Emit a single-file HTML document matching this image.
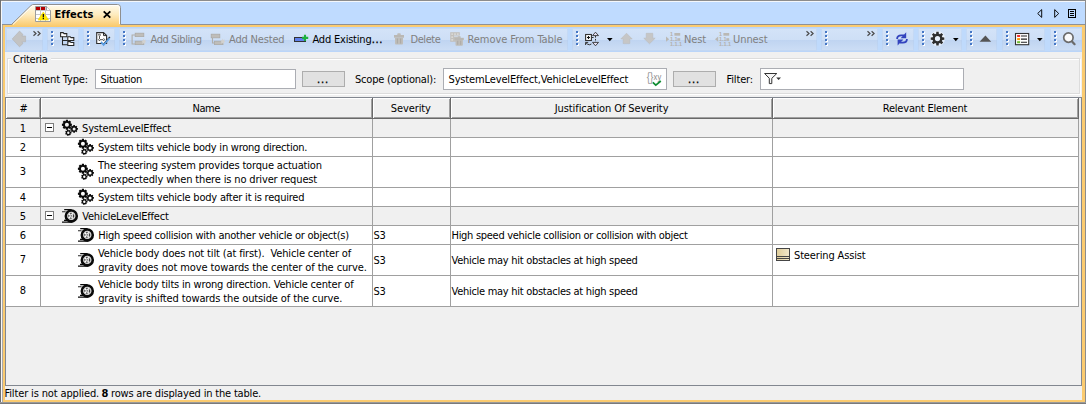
<!DOCTYPE html>
<html><head><meta charset="utf-8"><title>Effects</title>
<style>
html,body{margin:0;padding:0;}
body{width:1086px;height:404px;overflow:hidden;background:#F0F0F0;position:relative;
 font-family:"DejaVu Sans Condensed","Liberation Sans",sans-serif;font-size:11px;color:#000;}
.a{position:absolute;}
svg{position:absolute;overflow:visible;}
.t{position:absolute;white-space:pre;line-height:14px;height:14px;}
.b{font-weight:bold;}
.dis{color:#808080;}
.g{position:absolute;top:28px;height:23px;background:linear-gradient(#D4E3F8 0,#CEDFF6 52%,#BFD4F1 52%,#CDDEF5 100%);box-shadow:inset 0 0 0 1px rgba(176,204,240,.35);}
.grip{position:absolute;top:31px;width:3px;height:15px;}
.fld{position:absolute;top:69px;height:18px;background:#fff;border:1px solid #ABADB3;}
.btn{position:absolute;top:71px;width:41px;height:14px;background:#E1E1E1;border:1px solid #ADADAD;}
.hl{position:absolute;left:6px;width:1073px;height:1px;background:#A0A0A0;}
.vl{position:absolute;top:119px;width:1px;height:188px;background:#A0A0A0;}
.row{position:absolute;left:6px;width:1073px;background:#fff;}
.grp{background:#F0F0F0;}
.hc{position:absolute;top:98px;height:21px;background:#F0F0F0;box-shadow:inset -1px -1px 0 #696969,inset 1px 1px 0 #fff,inset -2px -2px 0 #A0A0A0;}
</style></head><body>
<div class="a" style="left:0;top:0;width:1086px;height:27px;background:#BFDBFF"></div>
<div class="a" style="left:0;top:1px;width:1086px;height:1px;background:#F4F7FB"></div>
<div class="a" style="left:1px;top:1px;width:1px;height:402px;background:#F8F8F8"></div>
<div class="a" style="left:0;top:0;width:1086px;height:1px;background:#8C8C8C"></div>
<div class="a" style="left:0;top:0;width:1px;height:404px;background:#707070"></div>
<div class="a" style="left:1085px;top:0;width:1px;height:404px;background:#8C8C8C"></div>
<div class="a" style="left:0;top:402px;width:1086px;height:1px;background:#9A9A9A"></div>
<div class="a" style="left:0;top:403px;width:1086px;height:1px;background:#7A7A7A"></div>
<div class="a" style="left:2px;top:24px;width:1px;height:378px;background:#A9A9A9"></div>
<div class="a" style="left:2px;top:24px;width:1083px;height:1px;background:#8E9196"></div>
<div class="a" style="left:3px;top:25px;width:1082px;height:2px;background:#FBCB70"></div>
<div class="a" style="left:3px;top:25px;width:2px;height:377px;background:#FBCB70"></div>
<div class="a" style="left:1082px;top:25px;width:2.6px;height:377px;background:#FBCB70"></div>
<div class="a" style="left:3px;top:400px;width:1082px;height:2px;background:#FBCB70"></div>
<div class="a" style="left:5px;top:27px;width:1077px;height:24px;background:#BFDAFC"></div>
<div class="a" style="left:5px;top:27px;width:1077px;height:1px;background:#B9D5FB"></div>
<div class="a" style="left:5px;top:51px;width:1077px;height:1px;background:#BAD5F9"></div>
<div class="g" style="left:6px;width:37.4px"></div>
<div class="g" style="left:47px;width:32px"></div>
<div class="g" style="left:82.5px;width:32.0px"></div>
<div class="g" style="left:118.5px;width:449.0px"></div>
<div class="g" style="left:572px;width:244.5px"></div>
<div class="g" style="left:821px;width:56.5px"></div>
<div class="g" style="left:882px;width:31.5px"></div>
<div class="g" style="left:917.5px;width:44.0px"></div>
<div class="g" style="left:965.7px;width:31.8px"></div>
<div class="g" style="left:1001.8px;width:43.5px"></div>
<div class="g" style="left:1049.8px;width:31.9px"></div>
<svg class="grip" style="left:51px" width="3" height="15" viewBox="0 0 3 15"><rect x="1" y="1" width="2" height="2" fill="#fff"/><rect x="0" y="0" width="2" height="2" fill="#4577C6"/><rect x="1" y="5" width="2" height="2" fill="#fff"/><rect x="0" y="4" width="2" height="2" fill="#4577C6"/><rect x="1" y="9" width="2" height="2" fill="#fff"/><rect x="0" y="8" width="2" height="2" fill="#4577C6"/><rect x="1" y="13" width="2" height="2" fill="#fff"/><rect x="0" y="12" width="2" height="2" fill="#4577C6"/></svg>
<svg class="grip" style="left:87px" width="3" height="15" viewBox="0 0 3 15"><rect x="1" y="1" width="2" height="2" fill="#fff"/><rect x="0" y="0" width="2" height="2" fill="#4577C6"/><rect x="1" y="5" width="2" height="2" fill="#fff"/><rect x="0" y="4" width="2" height="2" fill="#4577C6"/><rect x="1" y="9" width="2" height="2" fill="#fff"/><rect x="0" y="8" width="2" height="2" fill="#4577C6"/><rect x="1" y="13" width="2" height="2" fill="#fff"/><rect x="0" y="12" width="2" height="2" fill="#4577C6"/></svg>
<svg class="grip" style="left:123px" width="3" height="15" viewBox="0 0 3 15"><rect x="1" y="1" width="2" height="2" fill="#fff"/><rect x="0" y="0" width="2" height="2" fill="#4577C6"/><rect x="1" y="5" width="2" height="2" fill="#fff"/><rect x="0" y="4" width="2" height="2" fill="#4577C6"/><rect x="1" y="9" width="2" height="2" fill="#fff"/><rect x="0" y="8" width="2" height="2" fill="#4577C6"/><rect x="1" y="13" width="2" height="2" fill="#fff"/><rect x="0" y="12" width="2" height="2" fill="#4577C6"/></svg>
<svg class="grip" style="left:576px" width="3" height="15" viewBox="0 0 3 15"><rect x="1" y="1" width="2" height="2" fill="#fff"/><rect x="0" y="0" width="2" height="2" fill="#4577C6"/><rect x="1" y="5" width="2" height="2" fill="#fff"/><rect x="0" y="4" width="2" height="2" fill="#4577C6"/><rect x="1" y="9" width="2" height="2" fill="#fff"/><rect x="0" y="8" width="2" height="2" fill="#4577C6"/><rect x="1" y="13" width="2" height="2" fill="#fff"/><rect x="0" y="12" width="2" height="2" fill="#4577C6"/></svg>
<svg class="grip" style="left:825px" width="3" height="15" viewBox="0 0 3 15"><rect x="1" y="1" width="2" height="2" fill="#fff"/><rect x="0" y="0" width="2" height="2" fill="#4577C6"/><rect x="1" y="5" width="2" height="2" fill="#fff"/><rect x="0" y="4" width="2" height="2" fill="#4577C6"/><rect x="1" y="9" width="2" height="2" fill="#fff"/><rect x="0" y="8" width="2" height="2" fill="#4577C6"/><rect x="1" y="13" width="2" height="2" fill="#fff"/><rect x="0" y="12" width="2" height="2" fill="#4577C6"/></svg>
<svg class="grip" style="left:886px" width="3" height="15" viewBox="0 0 3 15"><rect x="1" y="1" width="2" height="2" fill="#fff"/><rect x="0" y="0" width="2" height="2" fill="#4577C6"/><rect x="1" y="5" width="2" height="2" fill="#fff"/><rect x="0" y="4" width="2" height="2" fill="#4577C6"/><rect x="1" y="9" width="2" height="2" fill="#fff"/><rect x="0" y="8" width="2" height="2" fill="#4577C6"/><rect x="1" y="13" width="2" height="2" fill="#fff"/><rect x="0" y="12" width="2" height="2" fill="#4577C6"/></svg>
<svg class="grip" style="left:922px" width="3" height="15" viewBox="0 0 3 15"><rect x="1" y="1" width="2" height="2" fill="#fff"/><rect x="0" y="0" width="2" height="2" fill="#4577C6"/><rect x="1" y="5" width="2" height="2" fill="#fff"/><rect x="0" y="4" width="2" height="2" fill="#4577C6"/><rect x="1" y="9" width="2" height="2" fill="#fff"/><rect x="0" y="8" width="2" height="2" fill="#4577C6"/><rect x="1" y="13" width="2" height="2" fill="#fff"/><rect x="0" y="12" width="2" height="2" fill="#4577C6"/></svg>
<svg class="grip" style="left:970px" width="3" height="15" viewBox="0 0 3 15"><rect x="1" y="1" width="2" height="2" fill="#fff"/><rect x="0" y="0" width="2" height="2" fill="#4577C6"/><rect x="1" y="5" width="2" height="2" fill="#fff"/><rect x="0" y="4" width="2" height="2" fill="#4577C6"/><rect x="1" y="9" width="2" height="2" fill="#fff"/><rect x="0" y="8" width="2" height="2" fill="#4577C6"/><rect x="1" y="13" width="2" height="2" fill="#fff"/><rect x="0" y="12" width="2" height="2" fill="#4577C6"/></svg>
<svg class="grip" style="left:1006px" width="3" height="15" viewBox="0 0 3 15"><rect x="1" y="1" width="2" height="2" fill="#fff"/><rect x="0" y="0" width="2" height="2" fill="#4577C6"/><rect x="1" y="5" width="2" height="2" fill="#fff"/><rect x="0" y="4" width="2" height="2" fill="#4577C6"/><rect x="1" y="9" width="2" height="2" fill="#fff"/><rect x="0" y="8" width="2" height="2" fill="#4577C6"/><rect x="1" y="13" width="2" height="2" fill="#fff"/><rect x="0" y="12" width="2" height="2" fill="#4577C6"/></svg>
<svg class="grip" style="left:1054px" width="3" height="15" viewBox="0 0 3 15"><rect x="1" y="1" width="2" height="2" fill="#fff"/><rect x="0" y="0" width="2" height="2" fill="#4577C6"/><rect x="1" y="5" width="2" height="2" fill="#fff"/><rect x="0" y="4" width="2" height="2" fill="#4577C6"/><rect x="1" y="9" width="2" height="2" fill="#fff"/><rect x="0" y="8" width="2" height="2" fill="#4577C6"/><rect x="1" y="13" width="2" height="2" fill="#fff"/><rect x="0" y="12" width="2" height="2" fill="#4577C6"/></svg>
<svg style="left:33px;top:31px" width="8" height="5" viewBox="0 0 8 5"><path d="M0.5 0.2L3 2.5L0.5 4.8M4.6 0.2L7.1 2.5L4.6 4.8" fill="none" stroke="#4A4A4A" stroke-width="1.2"/></svg>
<svg style="left:806px;top:31px" width="8" height="5" viewBox="0 0 8 5"><path d="M0.5 0.2L3 2.5L0.5 4.8M4.6 0.2L7.1 2.5L4.6 4.8" fill="none" stroke="#4A4A4A" stroke-width="1.2"/></svg>
<svg style="left:867px;top:31px" width="8" height="5" viewBox="0 0 8 5"><path d="M0.5 0.2L3 2.5L0.5 4.8M4.6 0.2L7.1 2.5L4.6 4.8" fill="none" stroke="#4A4A4A" stroke-width="1.2"/></svg>
<svg style="left:606.7px;top:38px" width="6" height="4" viewBox="0 0 6 4"><path d="M0 0H5.6L2.8 3.2Z" fill="#000"/></svg>
<svg style="left:952.9px;top:38px" width="6" height="4" viewBox="0 0 6 4"><path d="M0 0H5.6L2.8 3.2Z" fill="#000"/></svg>
<svg style="left:1036.8px;top:38px" width="6" height="4" viewBox="0 0 6 4"><path d="M0 0H5.6L2.8 3.2Z" fill="#000"/></svg>
<svg style="left:0;top:0" width="130" height="28" viewBox="0 0 130 28">
<defs><linearGradient id="tg" x1="0" y1="0" x2="0" y2="1"><stop offset="0" stop-color="#FFFCEE"/><stop offset="0.45" stop-color="#FEEBBE"/><stop offset="1" stop-color="#FAC868"/></linearGradient></defs>
<path d="M5 27V25H11.5L31 5.5Q32 4.5 34 4.5H117.5Q120.5 4.5 120.5 7.5V25H130V27Z" fill="url(#tg)" stroke="none"/>
<path d="M11.5 24.5L31 5.5Q32 4.5 34 4.5H117.5Q120.5 4.5 120.5 7.5V24.5" fill="none" stroke="#8F8F8F" stroke-width="1"/>
<path d="M13 24.5L32 6Q32.6 5.5 34 5.5H117.5Q119.5 5.5 119.5 7.5V24" fill="none" stroke="#FFFFFF" stroke-width="1" opacity=".9"/>
</svg>
<svg style="left:35px;top:6px" width="16" height="16" viewBox="0 0 16 16">
<path d="M0.5 0.5H11.5L15.5 4.5V15.5H0.5Z" fill="#fff" stroke="#9C9C9C"/>
<path d="M11.5 0.5V4.5H15.5" fill="#fff" stroke="#9C9C9C"/>
<rect x="1" y="1" width="4" height="3" fill="#B40000"/><rect x="6" y="1" width="4" height="3" fill="#B40000"/>
<path d="M1 4.5H15M1 8.5H15M1 12.5H15M5.5 1V15M10.5 1V15" stroke="#C8C8C8" stroke-width="1" fill="none"/>
<path d="M8.3 6L13.6 14H3Z" fill="#FFE900" stroke="#F2D500" stroke-width=".6"/>
<rect x="7.7" y="8" width="1.3" height="3.4" fill="#111"/><rect x="7.7" y="12" width="1.3" height="1.2" fill="#111"/>
</svg>
<svg style="left:103px;top:11px" width="8" height="7" viewBox="0 0 8 7"><path d="M0.7 0.3L7.3 6.7M7.3 0.3L0.7 6.7" stroke="#000" stroke-width="1.8" fill="none"/></svg>
<svg style="left:1037px;top:9px" width="6" height="9" viewBox="0 0 6 9"><path d="M4.7 0.6V8.4L0.7 4.5Z" fill="none" stroke="#000" stroke-width=".95"/></svg>
<svg style="left:1054px;top:9px" width="6" height="9" viewBox="0 0 6 9"><path d="M0.7 0.6V8.4L4.7 4.5Z" fill="none" stroke="#000" stroke-width=".95"/></svg>
<svg style="left:1068px;top:9px" width="8" height="9" viewBox="0 0 8 9"><rect x=".5" y=".5" width="7" height="8" fill="none" stroke="#000"/><path d="M2 2.5H6M2 4.5H6M2 6.5H6" stroke="#000"/></svg>
<div class="a" style="left:7px;top:58px;width:1071px;height:34px;border:1px solid #DCDCDC;box-shadow:inset 1px 1px 0 #fff, 1px 1px 0 #fff"></div>
<div class="a" style="left:11px;top:54px;width:40px;height:12px;background:#F0F0F0"></div>
<div class="fld" style="left:95px;width:199px"></div>
<div class="btn" style="left:302px"></div>
<div class="fld" style="left:443px;width:222px;top:68px;height:20px"></div>
<div class="btn" style="left:673px"></div>
<div class="fld" style="left:760px;width:202px;top:68px;height:20px"></div>
<div class="a" style="left:5px;top:97px;width:1075px;height:287px;border:1px solid #828790"></div>
<div class="row grp" style="top:119px;height:18px"></div>
<div class="hl" style="top:137px"></div>
<div class="row" style="top:138px;height:18px"></div>
<div class="hl" style="top:156px"></div>
<div class="row" style="top:157px;height:30px"></div>
<div class="hl" style="top:187px"></div>
<div class="row" style="top:188px;height:18px"></div>
<div class="hl" style="top:206px"></div>
<div class="row grp" style="top:207px;height:18px"></div>
<div class="hl" style="top:225px"></div>
<div class="row" style="top:226px;height:18px"></div>
<div class="hl" style="top:244px"></div>
<div class="row" style="top:245px;height:30px"></div>
<div class="hl" style="top:275px"></div>
<div class="row" style="top:276px;height:30px"></div>
<div class="hl" style="top:306px"></div>
<div class="vl" style="left:40px"></div>
<div class="vl" style="left:372px"></div>
<div class="vl" style="left:450px"></div>
<div class="vl" style="left:772px"></div>
<div class="vl" style="left:1078px"></div>
<div class="hc" style="left:6px;width:35px"></div>
<div class="hc" style="left:41px;width:332px"></div>
<div class="hc" style="left:373px;width:78px"></div>
<div class="hc" style="left:451px;width:322px"></div>
<div class="hc" style="left:773px;width:306px"></div>
<svg style="left:12px;top:31px" width="14" height="16" viewBox="0 0 14 16"><path d="M0.2 7.9L7.5 0.1L11 3.5L9.9 5H13.6V10.8H9.9L11 12.4L7.5 15.8Z" fill="#C3C3C3" stroke="#B4B4B4" stroke-width=".6"/></svg>
<svg style="left:60px;top:32px" width="14" height="14" viewBox="0 0 14 14"><path d="M0.6 4.7V0.6H3.2L4 1.6H6.8V4.7Z" fill="#fff" stroke="#262626" stroke-width="1.05"/>
<path d="M2.5 4.8V12.7H7.8M2.5 8.5H7.8" fill="none" stroke="#262626" stroke-width="1.05"/>
<path d="M7.8 8.5V4.7H10.2L11 5.6H13.8V8.5Z" fill="#fff" stroke="#262626" stroke-width="1.05"/>
<path d="M7.8 13.4V9.6H10.2L11 10.5H13.8V13.4Z" fill="#fff" stroke="#262626" stroke-width="1.05"/></svg>
<svg style="left:96px;top:32px" width="14" height="14" viewBox="0 0 14 14"><path d="M0.7 0.6H7.5L10.6 3.6V11.5H0.7Z" fill="#fff" stroke="#2E2E2E" stroke-width="1.1"/>
<path d="M7.5 0.6V3.6H10.6" fill="none" stroke="#2E2E2E" stroke-width="1"/>
<path d="M3.5 1.9L4.6 3L3.5 4.1L2.4 3ZM3.5 4.1V6.6M3.5 6.6L4.6 7.7L3.5 8.8L2.4 7.7ZM7.7 6.6L8.8 7.7L7.7 8.8L6.6 7.7ZM4.6 7.7H6.6" fill="none" stroke="#2A2A2A" stroke-width=".8"/>
<path d="M7.4 12.2L13.4 5.4L14 6" fill="none" stroke="#333" stroke-width="1.1"/>
<path d="M5 9.9L7.6 12.9L13.6 6.3" fill="none" stroke="#5B9FE6" stroke-width="1.7"/></svg>
<svg style="left:131px;top:32px" width="16" height="14" viewBox="0 0 16 14"><path d="M4 3H1.1V12H4" fill="none" stroke="#B0AEAA" stroke-width="1.1"/>
<rect x="4.2" y="1.2" width="8.6" height="3.4" fill="#BFBDB9" stroke="#ACAAA6" stroke-width=".8"/>
<rect x="4.2" y="9.2" width="8.6" height="3.4" fill="#BFBDB9" stroke="#ACAAA6" stroke-width=".8"/>
<path d="M12.4 6.6L13.1 8.3L14.9 7.6L14.2 9.2L15.6 10L14 10.6L14.3 12L12.6 11.2L11 11.8L11.5 10L10.4 9L12 8.5Z" fill="#D2D1CF"/></svg>
<svg style="left:210px;top:32px" width="16" height="14" viewBox="0 0 16 14"><path d="M2.5 6V11H4.4" fill="none" stroke="#B0AEAA" stroke-width="1.1"/>
<rect x="1.2" y="2.2" width="8.6" height="3.6" fill="#BFBDB9" stroke="#ACAAA6" stroke-width=".8"/>
<rect x="4.4" y="9.2" width="8.6" height="3.4" fill="#BFBDB9" stroke="#ACAAA6" stroke-width=".8"/>
<path d="M12.3 6.4L13 8.1L14.8 7.4L14.1 9L15.5 9.8L13.9 10.4L14.2 11.8L12.5 11L10.9 11.6L11.4 9.8L10.3 8.8L11.9 8.3Z" fill="#D2D1CF"/></svg>
<svg style="left:294px;top:34px" width="15" height="9" viewBox="0 0 15 9"><rect x="0.5" y="3.5" width="11" height="4" fill="#5F80EA" stroke="#333" stroke-width="1"/>
<path d="M8 3.9H14.2M11 0.8V7" stroke="#1DB13F" stroke-width="2.1" fill="none"/></svg>
<svg style="left:394px;top:33px" width="10" height="12" viewBox="0 0 10 12"><g transform="translate(0,0)"><rect x="3.2" y="0.2" width="3.6" height="2.2" rx="1" fill="#BDBBB7"/><rect x="0" y="2" width="10" height="2.7" fill="#BAB8B4"/><path d="M1 4.7H9V10.6Q9 11.6 8 11.6H2Q1 11.6 1 10.6Z" fill="#BFBDB9"/><path d="M3.4 5.6V10.4M6.6 5.6V10.4" stroke="#ACAAA6" stroke-width="1.1"/></g></svg>
<svg style="left:450px;top:32px" width="14" height="14" viewBox="0 0 14 14"><rect x="0.2" y="0.2" width="9.6" height="9.6" fill="#C2C0BC"/>
<path d="M1.3 1.3H3.1V3H1.3ZM4.1 1.3H5.9V3H4.1ZM6.9 1.3H8.7V3H6.9ZM1.3 4.2H3.1V5.9H1.3ZM1.3 7H3.1V8.7H1.3Z" fill="#D8D7D5"/>
<rect x="4" y="3.6" width="10" height="1" fill="#D5E3F7"/><g transform="translate(4.6,4.2) scale(0.92,0.82)"><rect x="3.2" y="0.2" width="3.6" height="2.2" rx="1" fill="#BDBBB7"/><rect x="0" y="2" width="10" height="2.7" fill="#BAB8B4"/><path d="M1 4.7H9V10.6Q9 11.6 8 11.6H2Q1 11.6 1 10.6Z" fill="#BFBDB9"/><path d="M3.4 5.6V10.4M6.6 5.6V10.4" stroke="#ACAAA6" stroke-width="1.1"/></g></svg>
<svg style="left:585px;top:32px" width="14" height="14" viewBox="0 0 14 14"><rect x="0.6" y="2.5" width="5.8" height="6" fill="#fff" stroke="#333" stroke-width="1.1"/>
<path d="M2 5.5H5M3.5 4V7" stroke="#111" stroke-width="1.1"/>
<path d="M6.6 5.5H8.6" stroke="#333" stroke-width="1"/>
<path d="M10.5 4V10" stroke="#333" stroke-width="1" stroke-dasharray="1.6 1.3"/>
<path d="M10.5 0.2L13.5 3.6H7.5Z" fill="#E6E0F4" stroke="#333" stroke-width=".9"/>
<path d="M10.5 13.8L13.5 10.4H7.5Z" fill="#E6E0F4" stroke="#333" stroke-width=".9"/>
<path d="M0.6 10.4H3.2M0.6 10.4V13M0.8 10.6L2.6 12.2Q4.5 13.4 6.4 12" fill="none" stroke="#333" stroke-width="1"/></svg>
<svg style="left:620px;top:33px" width="13" height="11" viewBox="0 0 13 11"><path d="M6.5 0.2L12.2 6H9.8V10.6H3.2V6H0.8Z" fill="#C6C6C6" stroke="#B9B9B9" stroke-width=".5"/></svg>
<svg style="left:643px;top:33px" width="13" height="11" viewBox="0 0 13 11"><path d="M6.5 10.8L12.2 5.2H9.8V0.3H3.2V5.2H0.8Z" fill="#C6C6C6" stroke="#B9B9B9" stroke-width=".5"/></svg>
<svg style="left:666px;top:32px" width="15" height="14" viewBox="0 0 15 14"><path d="M0 4.6L3.2 7.2L0 9.8Z" fill="#BAB8B4"/><g font-family="'Liberation Sans',sans-serif" font-size="5.4" font-weight="bold" fill="#B2B0AC">
<text x="4" y="3.8">1</text><text x="4" y="8.9">1.1</text><text x="4" y="13.8">1.1.1</text></g>
<rect x="8.4" y="1" width="5.8" height="2.7" fill="#BAB8B4"/><rect x="11.3" y="6.2" width="2.9" height="2.7" fill="#BAB8B4"/></svg>
<svg style="left:714.6px;top:32px" width="15" height="14" viewBox="0 0 15 14"><path d="M3.2 4.6L0 7.2L3.2 9.8Z" fill="#BAB8B4"/><g font-family="'Liberation Sans',sans-serif" font-size="5.4" font-weight="bold" fill="#B2B0AC">
<text x="4" y="3.8">1</text><text x="4" y="8.9">1.1</text><text x="4" y="13.8">1.1.1</text></g>
<rect x="8.4" y="1" width="5.8" height="2.7" fill="#BAB8B4"/><rect x="11.3" y="6.2" width="2.9" height="2.7" fill="#BAB8B4"/></svg>
<svg style="left:896px;top:32px" width="12" height="14" viewBox="0 0 12 14"><path d="M1.1 7Q1.1 3.3 5.2 3.3H8" fill="none" stroke="#3344BE" stroke-width="1.8"/>
<path d="M10.2 0.2V6.2H4.6Z" fill="#3344BE"/>
<path d="M10.9 7Q10.9 10.7 6.8 10.7H4" fill="none" stroke="#3344BE" stroke-width="1.8"/>
<path d="M1.6 13.6V7.6H7.4Z" fill="#3344BE"/></svg>
<svg style="left:930px;top:31px" width="15" height="15" viewBox="0 0 15 15"><circle cx="7.5" cy="7.6" r="7.6" fill="#fff" opacity=".55"/><path d="M14.30 6.41L14.30 8.79L12.32 8.92L11.84 10.08L13.15 11.57L11.47 13.25L9.98 11.94L8.82 12.42L8.69 14.40L6.31 14.40L6.18 12.42L5.02 11.94L3.53 13.25L1.85 11.57L3.16 10.08L2.68 8.92L0.70 8.79L0.70 6.41L2.68 6.28L3.16 5.12L1.85 3.63L3.53 1.95L5.02 3.26L6.18 2.78L6.31 0.80L8.69 0.80L8.82 2.78L9.98 3.26L11.47 1.95L13.15 3.63L11.84 5.12L12.32 6.28ZM4.90 7.60a2.60 2.60 0 1 0 5.20 0a2.60 2.60 0 1 0 -5.20 0Z" fill="#2E2E2E" fill-rule="evenodd"/></svg>
<svg style="left:979px;top:35px" width="13" height="7" viewBox="0 0 13 7"><path d="M6.4 0.6L12.2 6.8H0.6Z" fill="#555"/></svg>
<svg style="left:1015px;top:33px" width="14" height="12" viewBox="0 0 14 12"><rect x="0.5" y="0.5" width="13.2" height="11.2" fill="#fff" stroke="#333" stroke-width="1.1"/>
<rect x="2.1" y="2" width="3" height="2" fill="#F03030"/><rect x="2.1" y="5.1" width="3" height="2" fill="#FF9800"/><rect x="2.1" y="8.2" width="3" height="2" fill="#6DBB2E"/>
<path d="M6 3H12M6 6.1H12M6 9.2H12" stroke="#222" stroke-width="1.15"/></svg>
<svg style="left:1062px;top:32px" width="14" height="14" viewBox="0 0 14 14"><circle cx="6.4" cy="5.6" r="4.7" fill="#FAFAFA" stroke="#6B6B6B" stroke-width="1.7"/>
<path d="M10 9.4L12.6 12.2" stroke="#6B6B6B" stroke-width="2.2" stroke-linecap="round"/></svg>
<svg style="left:647px;top:71px" width="15" height="16" viewBox="0 0 15 16"><g font-family="'Liberation Sans',sans-serif" fill="#9A9A9A"><text x="-0.2" y="10.4" font-size="13" textLength="6.6" lengthAdjust="spacingAndGlyphs">{}</text><text x="6.6" y="9" font-size="9.5" textLength="7.6" lengthAdjust="spacingAndGlyphs" fill="#8A8A8A">xy</text></g>
<path d="M5.8 11.3L8.8 14.2L13.8 10" fill="none" stroke="#0E8C30" stroke-width="1.7"/></svg>
<svg style="left:764px;top:73px" width="18" height="12" viewBox="0 0 18 12"><path d="M0.6 0.5H12.8L7.8 5.3V10.6H5.3V5.3Z" fill="#F6F6F6" stroke="#333" stroke-width="1"/>
<path d="M12.2 4.4H17L14.6 7Z" fill="#333"/></svg>
<svg style="left:45px;top:123px" width="9" height="9" viewBox="0 0 9 9"><rect x="0.5" y="0.5" width="8" height="8" fill="#fff" stroke="#7D7D7D"/><path d="M2 4.5H7" stroke="#000"/></svg>
<svg style="left:45px;top:211px" width="9" height="9" viewBox="0 0 9 9"><rect x="0.5" y="0.5" width="8" height="8" fill="#fff" stroke="#7D7D7D"/><path d="M2 4.5H7" stroke="#000"/></svg>
<svg style="left:62px;top:120px" width="16" height="16" viewBox="0 0 16 16"><path d="M9.89 3.67L9.89 5.73L8.72 5.88L8.44 6.57L9.16 7.50L7.70 8.96L6.77 8.24L6.08 8.52L5.93 9.69L3.87 9.69L3.72 8.52L3.03 8.24L2.10 8.96L0.64 7.50L1.36 6.57L1.08 5.88L-0.09 5.73L-0.09 3.67L1.08 3.52L1.36 2.83L0.64 1.90L2.10 0.44L3.03 1.16L3.72 0.88L3.87 -0.29L5.93 -0.29L6.08 0.88L6.77 1.16L7.70 0.44L9.16 1.90L8.44 2.83L8.72 3.52ZM2.90 4.70a2.00 2.00 0 1 0 4.00 0a2.00 2.00 0 1 0 -4.00 0Z" fill="#0A0A0A" fill-rule="evenodd"/><path d="M15.92 8.11L15.92 9.69L14.97 9.78L14.75 10.30L15.36 11.04L14.24 12.16L13.50 11.55L12.98 11.77L12.89 12.72L11.31 12.72L11.22 11.77L10.70 11.55L9.96 12.16L8.84 11.04L9.45 10.30L9.23 9.78L8.28 9.69L8.28 8.11L9.23 8.02L9.45 7.50L8.84 6.76L9.96 5.64L10.70 6.25L11.22 6.03L11.31 5.08L12.89 5.08L12.98 6.03L13.50 6.25L14.24 5.64L15.36 6.76L14.75 7.50L14.97 8.02ZM10.60 8.90a1.50 1.50 0 1 0 3.00 0a1.50 1.50 0 1 0 -3.00 0Z" fill="#0A0A0A" fill-rule="evenodd"/><path d="M9.41 11.96L9.41 13.44L8.61 13.52L8.38 13.99L8.82 14.67L7.66 15.60L7.10 15.02L6.59 15.13L6.33 15.90L4.89 15.57L4.99 14.77L4.58 14.44L3.82 14.72L3.17 13.38L3.86 12.96L3.86 12.44L3.17 12.02L3.82 10.68L4.58 10.96L4.99 10.63L4.89 9.83L6.33 9.50L6.59 10.27L7.10 10.38L7.66 9.80L8.82 10.73L8.38 11.41L8.61 11.88ZM5.10 12.70a1.20 1.20 0 1 0 2.40 0a1.20 1.20 0 1 0 -2.40 0Z" fill="#0A0A0A" fill-rule="evenodd"/></svg>
<svg style="left:78px;top:139px" width="16" height="16" viewBox="0 0 16 16"><path d="M9.89 3.67L9.89 5.73L8.72 5.88L8.44 6.57L9.16 7.50L7.70 8.96L6.77 8.24L6.08 8.52L5.93 9.69L3.87 9.69L3.72 8.52L3.03 8.24L2.10 8.96L0.64 7.50L1.36 6.57L1.08 5.88L-0.09 5.73L-0.09 3.67L1.08 3.52L1.36 2.83L0.64 1.90L2.10 0.44L3.03 1.16L3.72 0.88L3.87 -0.29L5.93 -0.29L6.08 0.88L6.77 1.16L7.70 0.44L9.16 1.90L8.44 2.83L8.72 3.52ZM2.90 4.70a2.00 2.00 0 1 0 4.00 0a2.00 2.00 0 1 0 -4.00 0Z" fill="#0A0A0A" fill-rule="evenodd"/><path d="M15.92 8.11L15.92 9.69L14.97 9.78L14.75 10.30L15.36 11.04L14.24 12.16L13.50 11.55L12.98 11.77L12.89 12.72L11.31 12.72L11.22 11.77L10.70 11.55L9.96 12.16L8.84 11.04L9.45 10.30L9.23 9.78L8.28 9.69L8.28 8.11L9.23 8.02L9.45 7.50L8.84 6.76L9.96 5.64L10.70 6.25L11.22 6.03L11.31 5.08L12.89 5.08L12.98 6.03L13.50 6.25L14.24 5.64L15.36 6.76L14.75 7.50L14.97 8.02ZM10.60 8.90a1.50 1.50 0 1 0 3.00 0a1.50 1.50 0 1 0 -3.00 0Z" fill="#0A0A0A" fill-rule="evenodd"/><path d="M9.41 11.96L9.41 13.44L8.61 13.52L8.38 13.99L8.82 14.67L7.66 15.60L7.10 15.02L6.59 15.13L6.33 15.90L4.89 15.57L4.99 14.77L4.58 14.44L3.82 14.72L3.17 13.38L3.86 12.96L3.86 12.44L3.17 12.02L3.82 10.68L4.58 10.96L4.99 10.63L4.89 9.83L6.33 9.50L6.59 10.27L7.10 10.38L7.66 9.80L8.82 10.73L8.38 11.41L8.61 11.88ZM5.10 12.70a1.20 1.20 0 1 0 2.40 0a1.20 1.20 0 1 0 -2.40 0Z" fill="#0A0A0A" fill-rule="evenodd"/></svg>
<svg style="left:78px;top:164px" width="16" height="16" viewBox="0 0 16 16"><path d="M9.89 3.67L9.89 5.73L8.72 5.88L8.44 6.57L9.16 7.50L7.70 8.96L6.77 8.24L6.08 8.52L5.93 9.69L3.87 9.69L3.72 8.52L3.03 8.24L2.10 8.96L0.64 7.50L1.36 6.57L1.08 5.88L-0.09 5.73L-0.09 3.67L1.08 3.52L1.36 2.83L0.64 1.90L2.10 0.44L3.03 1.16L3.72 0.88L3.87 -0.29L5.93 -0.29L6.08 0.88L6.77 1.16L7.70 0.44L9.16 1.90L8.44 2.83L8.72 3.52ZM2.90 4.70a2.00 2.00 0 1 0 4.00 0a2.00 2.00 0 1 0 -4.00 0Z" fill="#0A0A0A" fill-rule="evenodd"/><path d="M15.92 8.11L15.92 9.69L14.97 9.78L14.75 10.30L15.36 11.04L14.24 12.16L13.50 11.55L12.98 11.77L12.89 12.72L11.31 12.72L11.22 11.77L10.70 11.55L9.96 12.16L8.84 11.04L9.45 10.30L9.23 9.78L8.28 9.69L8.28 8.11L9.23 8.02L9.45 7.50L8.84 6.76L9.96 5.64L10.70 6.25L11.22 6.03L11.31 5.08L12.89 5.08L12.98 6.03L13.50 6.25L14.24 5.64L15.36 6.76L14.75 7.50L14.97 8.02ZM10.60 8.90a1.50 1.50 0 1 0 3.00 0a1.50 1.50 0 1 0 -3.00 0Z" fill="#0A0A0A" fill-rule="evenodd"/><path d="M9.41 11.96L9.41 13.44L8.61 13.52L8.38 13.99L8.82 14.67L7.66 15.60L7.10 15.02L6.59 15.13L6.33 15.90L4.89 15.57L4.99 14.77L4.58 14.44L3.82 14.72L3.17 13.38L3.86 12.96L3.86 12.44L3.17 12.02L3.82 10.68L4.58 10.96L4.99 10.63L4.89 9.83L6.33 9.50L6.59 10.27L7.10 10.38L7.66 9.80L8.82 10.73L8.38 11.41L8.61 11.88ZM5.10 12.70a1.20 1.20 0 1 0 2.40 0a1.20 1.20 0 1 0 -2.40 0Z" fill="#0A0A0A" fill-rule="evenodd"/></svg>
<svg style="left:78px;top:189px" width="16" height="16" viewBox="0 0 16 16"><path d="M9.89 3.67L9.89 5.73L8.72 5.88L8.44 6.57L9.16 7.50L7.70 8.96L6.77 8.24L6.08 8.52L5.93 9.69L3.87 9.69L3.72 8.52L3.03 8.24L2.10 8.96L0.64 7.50L1.36 6.57L1.08 5.88L-0.09 5.73L-0.09 3.67L1.08 3.52L1.36 2.83L0.64 1.90L2.10 0.44L3.03 1.16L3.72 0.88L3.87 -0.29L5.93 -0.29L6.08 0.88L6.77 1.16L7.70 0.44L9.16 1.90L8.44 2.83L8.72 3.52ZM2.90 4.70a2.00 2.00 0 1 0 4.00 0a2.00 2.00 0 1 0 -4.00 0Z" fill="#0A0A0A" fill-rule="evenodd"/><path d="M15.92 8.11L15.92 9.69L14.97 9.78L14.75 10.30L15.36 11.04L14.24 12.16L13.50 11.55L12.98 11.77L12.89 12.72L11.31 12.72L11.22 11.77L10.70 11.55L9.96 12.16L8.84 11.04L9.45 10.30L9.23 9.78L8.28 9.69L8.28 8.11L9.23 8.02L9.45 7.50L8.84 6.76L9.96 5.64L10.70 6.25L11.22 6.03L11.31 5.08L12.89 5.08L12.98 6.03L13.50 6.25L14.24 5.64L15.36 6.76L14.75 7.50L14.97 8.02ZM10.60 8.90a1.50 1.50 0 1 0 3.00 0a1.50 1.50 0 1 0 -3.00 0Z" fill="#0A0A0A" fill-rule="evenodd"/><path d="M9.41 11.96L9.41 13.44L8.61 13.52L8.38 13.99L8.82 14.67L7.66 15.60L7.10 15.02L6.59 15.13L6.33 15.90L4.89 15.57L4.99 14.77L4.58 14.44L3.82 14.72L3.17 13.38L3.86 12.96L3.86 12.44L3.17 12.02L3.82 10.68L4.58 10.96L4.99 10.63L4.89 9.83L6.33 9.50L6.59 10.27L7.10 10.38L7.66 9.80L8.82 10.73L8.38 11.41L8.61 11.88ZM5.10 12.70a1.20 1.20 0 1 0 2.40 0a1.20 1.20 0 1 0 -2.40 0Z" fill="#0A0A0A" fill-rule="evenodd"/></svg>
<svg style="left:62px;top:209px" width="16" height="14" viewBox="0 0 16 14"><path d="M2.2 0.55H9.5M2 11.4H7M0 13.15H10.5" stroke="#0A0A0A" stroke-width="1.2" fill="none"/>
<path d="M0 2.7H3.6" stroke="#4A4A4A" stroke-width="1.2" fill="none"/>
<circle cx="9.3" cy="6.9" r="5.45" fill="#fff" stroke="#0A0A0A" stroke-width="2.6"/>
<circle cx="9.2" cy="6.9" r="2.35" fill="none" stroke="#3C3C3C" stroke-width="1.3" stroke-dasharray="1.55 1.4"/>
<circle cx="9.2" cy="6.9" r="3.5" fill="none" stroke="#9A9A9A" stroke-width=".6"/>
<circle cx="9.2" cy="6.9" r="0.8" fill="#666"/></svg>
<svg style="left:78px;top:228px" width="16" height="14" viewBox="0 0 16 14"><path d="M2.2 0.55H9.5M2 11.4H7M0 13.15H10.5" stroke="#0A0A0A" stroke-width="1.2" fill="none"/>
<path d="M0 2.7H3.6" stroke="#4A4A4A" stroke-width="1.2" fill="none"/>
<circle cx="9.3" cy="6.9" r="5.45" fill="#fff" stroke="#0A0A0A" stroke-width="2.6"/>
<circle cx="9.2" cy="6.9" r="2.35" fill="none" stroke="#3C3C3C" stroke-width="1.3" stroke-dasharray="1.55 1.4"/>
<circle cx="9.2" cy="6.9" r="3.5" fill="none" stroke="#9A9A9A" stroke-width=".6"/>
<circle cx="9.2" cy="6.9" r="0.8" fill="#666"/></svg>
<svg style="left:78px;top:253px" width="16" height="14" viewBox="0 0 16 14"><path d="M2.2 0.55H9.5M2 11.4H7M0 13.15H10.5" stroke="#0A0A0A" stroke-width="1.2" fill="none"/>
<path d="M0 2.7H3.6" stroke="#4A4A4A" stroke-width="1.2" fill="none"/>
<circle cx="9.3" cy="6.9" r="5.45" fill="#fff" stroke="#0A0A0A" stroke-width="2.6"/>
<circle cx="9.2" cy="6.9" r="2.35" fill="none" stroke="#3C3C3C" stroke-width="1.3" stroke-dasharray="1.55 1.4"/>
<circle cx="9.2" cy="6.9" r="3.5" fill="none" stroke="#9A9A9A" stroke-width=".6"/>
<circle cx="9.2" cy="6.9" r="0.8" fill="#666"/></svg>
<svg style="left:78px;top:284px" width="16" height="14" viewBox="0 0 16 14"><path d="M2.2 0.55H9.5M2 11.4H7M0 13.15H10.5" stroke="#0A0A0A" stroke-width="1.2" fill="none"/>
<path d="M0 2.7H3.6" stroke="#4A4A4A" stroke-width="1.2" fill="none"/>
<circle cx="9.3" cy="6.9" r="5.45" fill="#fff" stroke="#0A0A0A" stroke-width="2.6"/>
<circle cx="9.2" cy="6.9" r="2.35" fill="none" stroke="#3C3C3C" stroke-width="1.3" stroke-dasharray="1.55 1.4"/>
<circle cx="9.2" cy="6.9" r="3.5" fill="none" stroke="#9A9A9A" stroke-width=".6"/>
<circle cx="9.2" cy="6.9" r="0.8" fill="#666"/></svg>
<svg style="left:776px;top:248px" width="14" height="13" viewBox="0 0 14 13"><defs><linearGradient id="bg1" x1="0" y1="0" x2="1" y2="0"><stop offset="0" stop-color="#DFCD98"/><stop offset="1" stop-color="#F1E7CB"/></linearGradient></defs>
<rect x="0.5" y="0.5" width="13" height="12" fill="url(#bg1)" stroke="#454545" stroke-width="1"/>
<path d="M1 8.5H13M1 10.5H13" stroke="#454545" stroke-width="1"/></svg>
<!-- text -->
<span class="t b" style="left:54.5px;top:8px;letter-spacing:0.07px;">Effects</span>
<span class="t dis" style="left:150.5px;top:33px;letter-spacing:-0.42px;">Add Sibling</span>
<span class="t dis" style="left:229.0px;top:33px;letter-spacing:-0.17px;">Add Nested</span>
<span class="t" style="left:312.5px;top:33px;letter-spacing:-0.21px;">Add Existing</span>
<span class="t" style="left:371.8px;top:33px;letter-spacing:0.60px;-webkit-text-stroke:0.3px #000;">...</span>
<span class="t dis" style="left:410.5px;top:33px;letter-spacing:-0.42px;">Delete</span>
<span class="t dis" style="left:467.5px;top:33px;letter-spacing:-0.07px;">Remove From Table</span>
<span class="t dis" style="left:684.0px;top:33px;letter-spacing:-0.13px;">Nest</span>
<span class="t dis" style="left:733.0px;top:33px;letter-spacing:-0.07px;">Unnest</span>
<span class="t" style="left:13.0px;top:53px;letter-spacing:-0.25px;">Criteria</span>
<span class="t" style="left:20.0px;top:73px;letter-spacing:-0.16px;">Element Type:</span>
<span class="t" style="left:100.5px;top:73px;letter-spacing:-0.30px;">Situation</span>
<span class="t" style="left:317.0px;top:73px;letter-spacing:0.85px;-webkit-text-stroke:0.3px #000;">...</span>
<span class="t" style="left:355.0px;top:73px;letter-spacing:-0.20px;">Scope (optional):</span>
<span class="t" style="left:448.5px;top:73px;letter-spacing:-0.14px;">SystemLevelEffect,VehicleLevelEffect</span>
<span class="t" style="left:688.0px;top:73px;letter-spacing:0.85px;-webkit-text-stroke:0.3px #000;">...</span>
<span class="t" style="left:726.5px;top:73px;letter-spacing:-0.15px;">Filter:</span>
<span class="t" style="left:19.5px;top:102px;">#</span>
<span class="t" style="left:192.5px;top:102px;letter-spacing:-0.43px;">Name</span>
<span class="t" style="left:390.8px;top:102px;letter-spacing:-0.11px;">Severity</span>
<span class="t" style="left:554.8px;top:102px;letter-spacing:-0.10px;">Justification Of Severity</span>
<span class="t" style="left:882.7px;top:102px;letter-spacing:-0.19px;">Relevant Element</span>
<span class="t" style="left:19.7px;top:122px;">1</span>
<span class="t" style="left:19.7px;top:141px;">2</span>
<span class="t" style="left:19.7px;top:165px;">3</span>
<span class="t" style="left:19.7px;top:191px;">4</span>
<span class="t" style="left:19.7px;top:210px;">5</span>
<span class="t" style="left:19.7px;top:229px;">6</span>
<span class="t" style="left:19.7px;top:253px;">7</span>
<span class="t" style="left:19.7px;top:284px;">8</span>
<span class="t" style="left:82.0px;top:122px;letter-spacing:-0.15px;">SystemLevelEffect</span>
<span class="t" style="left:98.0px;top:141px;letter-spacing:-0.24px;">System tilts vehicle body in wrong direction.</span>
<span class="t" style="left:98.0px;top:159px;letter-spacing:-0.18px;">The steering system provides torque actuation</span>
<span class="t" style="left:98.0px;top:173px;letter-spacing:-0.15px;">unexpectedly when there is no driver request</span>
<span class="t" style="left:98.0px;top:191px;letter-spacing:-0.22px;">System tilts vehicle body after it is required</span>
<span class="t" style="left:82.2px;top:210px;letter-spacing:-0.20px;">VehicleLevelEffect</span>
<span class="t" style="left:98.2px;top:229px;letter-spacing:-0.23px;">High speed collision with another vehicle or object(s)</span>
<span class="t" style="left:98.0px;top:247px;letter-spacing:-0.14px;">Vehicle body does not tilt (at first).  Vehicle center of</span>
<span class="t" style="left:98.2px;top:261px;letter-spacing:-0.11px;">gravity does not move towards the center of the curve.</span>
<span class="t" style="left:98.0px;top:278px;letter-spacing:-0.19px;">Vehicle body tilts in wrong direction. Vehicle center of</span>
<span class="t" style="left:98.2px;top:292px;letter-spacing:-0.12px;">gravity is shifted towards the outside of the curve.</span>
<span class="t" style="left:373.5px;top:229px;letter-spacing:-0.30px;">S3</span>
<span class="t" style="left:373.5px;top:254px;letter-spacing:-0.30px;">S3</span>
<span class="t" style="left:373.5px;top:285px;letter-spacing:-0.30px;">S3</span>
<span class="t" style="left:451.5px;top:229px;letter-spacing:-0.29px;">High speed vehicle collision or collision with object</span>
<span class="t" style="left:451.5px;top:254px;letter-spacing:-0.28px;">Vehicle may hit obstacles at high speed</span>
<span class="t" style="left:451.5px;top:285px;letter-spacing:-0.28px;">Vehicle may hit obstacles at high speed</span>
<span class="t" style="left:794.0px;top:249px;letter-spacing:-0.15px;">Steering Assist</span>
<span class="t" style="left:4.5px;top:387px;letter-spacing:-0.14px;">Filter is not applied.</span>
<span class="t b" style="left:101.5px;top:387px;">8</span>
<span class="t" style="left:111.0px;top:387px;letter-spacing:-0.18px;">rows are displayed in the table.</span>
</body></html>
